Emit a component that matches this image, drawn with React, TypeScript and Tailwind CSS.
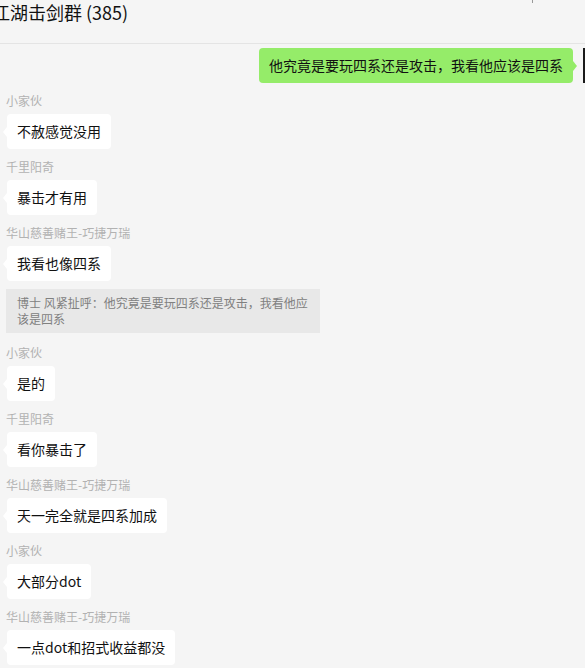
const font = { fontFamily: '"Noto Sans CJK SC", "Noto Sans", sans-serif' };

type Msg =
  | { kind: "text"; name: string; text: string }
  | { kind: "quote"; lines: string[] };

const messages: Msg[] = [
  { kind: "text", name: "小家伙", text: "不赦感觉没用" },
  { kind: "text", name: "千里阳奇", text: "暴击才有用" },
  { kind: "text", name: "华山慈善赌王-巧捷万瑞", text: "我看也像四系" },
  { kind: "quote", lines: ["博士 风紧扯呼：他究竟是要玩四系还是攻击，我看他应", "该是四系"] },
  { kind: "text", name: "小家伙", text: "是的" },
  { kind: "text", name: "千里阳奇", text: "看你暴击了" },
  { kind: "text", name: "华山慈善赌王-巧捷万瑞", text: "天一完全就是四系加成" },
  { kind: "text", name: "小家伙", text: "大部分dot" },
  { kind: "text", name: "华山慈善赌王-巧捷万瑞", text: "一点dot和招式收益都没" },
];

function Received({ name, text, afterQuote }: { name: string; text: string; afterQuote: boolean }) {
  return (
    <div className={afterQuote ? "mt-[12px]" : "mt-[10px]"}>
      <div className="h-[16px] pl-[6px] text-[12px] leading-[16px] text-[#b2b2b2]">{name}</div>
      <div className="mt-[5px] flex pl-[7px]">
        <div className="relative flex h-[35px] items-center rounded-[4px] bg-white px-[10px] text-[14px] text-[#111]">
          <span className="absolute top-1/2 left-[-4px] -translate-y-1/2 border-y-[5px] border-r-[4px] border-y-transparent border-r-white" />
          {text}
        </div>
      </div>
    </div>
  );
}

export default function App() {
  let prevQuote = false;
  return (
    <div className="h-[668px] w-[585px] overflow-hidden bg-[#f5f5f5]" style={font}>
      {/* Header */}
      <div className="relative h-[44px] border-b border-[#e4e4e4]">
        <div className="ml-[-8px] text-[18px] leading-[25px] whitespace-nowrap text-[#111]">
          江湖击剑群 (385)
        </div>
        <span className="absolute top-0 left-[532px] h-[3px] w-[1px] bg-[#999]" />
      </div>

      {/* Sent */}
      <div className="mt-[4px] mr-[-33px] flex justify-end gap-[10px]">
        <div className="relative flex h-[35px] items-center rounded-[4px] bg-[#95ec69] px-[10px] text-[14px] whitespace-nowrap text-[#111]">
          他究竟是要玩四系还是攻击，我看他应该是四系
          <span className="absolute top-1/2 right-[-4px] -translate-y-1/2 border-y-[5px] border-l-[4px] border-y-transparent border-l-[#95ec69]" />
        </div>
        <div className="h-[35px] w-[35px] bg-[#1a1a1a]" />
      </div>

      {/* Messages */}
      {messages.map((m, i) => {
        if (m.kind === "quote") {
          prevQuote = true;
          return (
            <div
              key={i}
              className="mt-[8px] ml-[6px] w-[314px] bg-[#e8e8e8] px-[11px] py-[6px] text-[12px] leading-[16px] text-[#808080]"
            >
              {m.lines.map((l, j) => (
                <div key={j} className="whitespace-nowrap">
                  {l}
                </div>
              ))}
            </div>
          );
        }
        const aq = prevQuote;
        prevQuote = false;
        return <Received key={i} name={m.name} text={m.text} afterQuote={aq} />;
      })}
    </div>
  );
}
